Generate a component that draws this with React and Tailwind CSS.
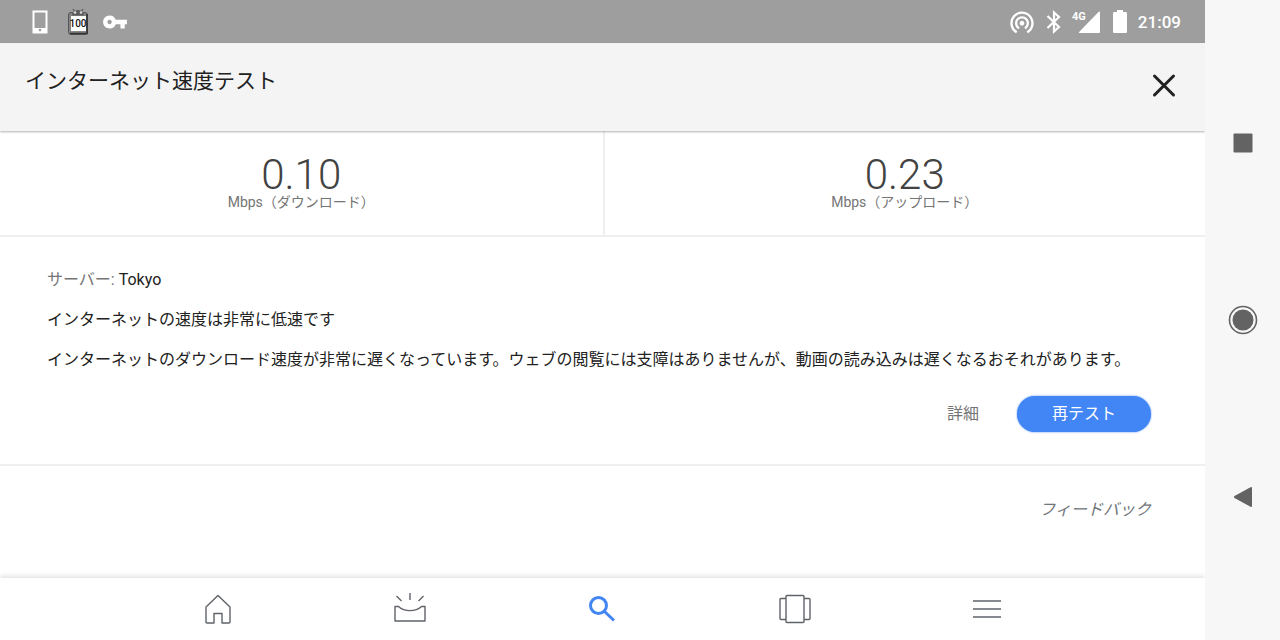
import { MdVpnKey, MdWifiTethering } from "react-icons/md";

function PhoneIcon() {
  return (
    <svg className="h-6 w-[22px]" viewBox="0 0 22 24" fill="none">
      <path d="M1.5 1.5h13v21h-13z" stroke="#fff" strokeWidth="2" />
      <path d="M1 18h14v5H1z" fill="#fff" />
      <circle cx="8" cy="20" r="1.3" fill="#9e9e9e" />
    </svg>
  );
}

function BatteryBadgeIcon() {
  return (
    <svg className="h-7 w-6" viewBox="0 0 24 28">
      <path d="M7 1 9 4M17 1 15 4" stroke="#555" strokeWidth="1.2" />
      <rect x="2.5" y="4.5" width="19" height="22" rx="2.5" fill="#858585" stroke="#555" />
      <path d="M21 6v19.5H4" fill="none" stroke="#333" strokeWidth="1.6" />
      <path d="M6 7.5a6 5.5 0 0 1 12 0z" fill="#5a5a5a" />
      <circle cx="9" cy="4.500" r="1.3" fill="#ddd" />
      <circle cx="15" cy="4.500" r="1.3" fill="#ddd" />
      <rect x="5" y="8" width="15" height="15" fill="#fff" />
      <text x="12" y="19" textAnchor="middle" fontSize="10" fontWeight="500" fontFamily="Roboto, sans-serif" fill="#111">
        100
      </text>
    </svg>
  );
}

function BluetoothIcon() {
  return (
    <svg className="h-6 w-4" viewBox="0 0 16 24" fill="none" stroke="#fff" strokeWidth="2.2">
      <path d="M1.500 6 13 17l-5 4.500v-19L13 7 1.500 18" />
    </svg>
  );
}

function SignalIcon() {
  return (
    <svg className="h-6 w-7" viewBox="0 0 28 24" fill="#fff">
      <text x="0" y="10" fontSize="11" fontWeight="700" fontFamily="Roboto, sans-serif">
        4G
      </text>
      <path d="M28 2.500V22q0 1-1 1H7.500q-1.200 0-.4-.9L26.500 2q1.500-1.300 1.500.5z" />
    </svg>
  );
}

function BatteryIcon() {
  return (
    <svg className="h-6 w-[18px]" viewBox="0 0 18 24" fill="#fff">
      <rect x="7" y="0" width="6" height="5" />
      <rect x="3" y="2" width="14" height="21" rx="1.2" />
    </svg>
  );
}

function HomeIcon() {
  return (
    <svg className="h-8 w-8" viewBox="0 0 32 32" fill="none" stroke="currentColor" strokeWidth="1.4" strokeLinejoin="round">
      <path d="M16 2.500 28 14v15q0 1-1 1h-7v-9.500h-8V30H5q-1 0-1-1V14z" />
    </svg>
  );
}

function UpdatesIcon() {
  return (
    <svg className="h-8 w-8" viewBox="0 0 32 32" fill="none" stroke="currentColor" strokeWidth="1.4" strokeLinejoin="round">
      <path d="M1 13.500h3.500c6 5.500 17 5.500 23 0H31V28H1z" />
      <path d="M16 0v7M2.500 3l5 5M29.500 3l-5 5" />
    </svg>
  );
}

function SearchIcon() {
  return (
    <svg className="h-8 w-8" viewBox="0 0 32 32" fill="none" stroke="currentColor" strokeWidth="3">
      <circle cx="12.500" cy="12.500" r="8" />
      <path d="m18 18 10 9.500" />
    </svg>
  );
}

function CollectionsIcon() {
  return (
    <svg className="h-8 w-8" viewBox="0 0 32 32" fill="none" stroke="currentColor" strokeWidth="1.4" strokeLinejoin="round">
      <rect x="7" y="2.500" width="18" height="27" rx="1" />
      <path d="M7 5.500H2q-1 0-1 1v19q0 1 1 1h5M25 5.500h5q1 0 1 1v19q0 1-1 1h-5" />
    </svg>
  );
}

function MoreIcon() {
  return (
    <svg className="h-8 w-8" viewBox="0 0 32 32" stroke="currentColor" strokeWidth="1.4">
      <path d="M2 8h28M2 16h28M2 24h28" />
    </svg>
  );
}

const results = [
  { value: "0.10", label: "Mbps（ダウンロード）" },
  { value: "0.23", label: "Mbps（アップロード）" },
];

const tabs = [
  { name: "ホーム", icon: <HomeIcon /> },
  { name: "最新情報", icon: <UpdatesIcon /> },
  { name: "検索", icon: <SearchIcon />, active: true },
  { name: "コレクション", icon: <CollectionsIcon /> },
  { name: "その他", icon: <MoreIcon /> },
];

function StatusBar() {
  return (
    <div className="flex h-[43px] items-center justify-between bg-[#9e9e9e] pr-6 pl-8 text-white">
      <div className="flex items-center gap-3">
        <PhoneIcon />
        <BatteryBadgeIcon />
        <MdVpnKey className="h-[26px] w-[26px]" />
      </div>
      <div className="flex items-center gap-[10px]">
        <MdWifiTethering className="h-7 w-7" />
        <BluetoothIcon />
        <SignalIcon />
        <BatteryIcon />
        <span className="text-[17px] leading-6 font-medium">21:09</span>
      </div>
    </div>
  );
}

function SystemNav() {
  return (
    <nav className="z-20 flex w-[75px] shrink-0 flex-col items-center justify-around bg-[#f7f7f7] py-[54px] text-[#636363]">
      <button type="button" aria-label="アプリ履歴">
        <svg className="h-8 w-8" viewBox="0 0 32 32" fill="currentColor">
          <rect x="6.500" y="6.500" width="19" height="19" rx="1" />
        </svg>
      </button>
      <button type="button" aria-label="ホーム">
        <svg className="h-8 w-8" viewBox="0 0 32 32" fill="currentColor">
          <circle cx="16" cy="16" r="10.500" />
          <circle cx="16" cy="16" r="13.500" fill="none" stroke="currentColor" strokeWidth="1.6" />
        </svg>
      </button>
      <button type="button" aria-label="戻る">
        <svg className="h-8 w-8" viewBox="0 0 32 32" fill="currentColor">
          <path d="M7.500 15 23.500 6.200q1.500-.7 1.500 1v17.600q0 1.700-1.500 1L7.500 17q-1.500-1 0-2z" />
        </svg>
      </button>
    </nav>
  );
}

export default function App() {
  return (
    <div className="flex min-h-screen bg-white font-['Roboto','Noto_Sans_CJK_JP',sans-serif] text-[#212121]" lang="ja">
      <div className="flex min-w-0 flex-1 flex-col">
        <StatusBar />

        <header className="z-10 flex h-[88px] items-start justify-between bg-[#f4f4f4] pt-6 pr-[25px] pl-[25px] shadow-[0_1px_2px_rgba(0,0,0,0.3)]">
          <h1 className="text-[21px] leading-7">インターネット速度テスト</h1>
          <button type="button" aria-label="閉じる" className="pt-1">
            <svg className="h-8 w-8" viewBox="0 0 32 32" fill="none" stroke="currentColor" strokeWidth="3" strokeLinecap="round">
              <path d="m6.500 5 19 19M25.500 5l-19 19" />
            </svg>
          </button>
        </header>

        <main className="flex-1">
          <section className="grid grid-cols-2 border-b-2 border-[#efefef]">
            {results.map((result) => (
              <div
                key={result.label}
                className="flex flex-col items-center border-[#efefef] py-[25px] text-center last:border-l-2"
              >
                <p className="text-[42px] leading-[38px] font-light text-[#424242]">{result.value}</p>
                <p className="text-sm leading-4 text-[#757575]">{result.label}</p>
              </div>
            ))}
          </section>

          <section className="border-b-2 border-[#efefef] pt-[31px] pr-[54px] pb-8 pl-[47px]">
            <p>
              <span className="text-[#757575]">サーバー:</span> Tokyo
            </p>
            <p className="mt-4">インターネットの速度は非常に低速です</p>
            <p className="mt-4">
              インターネットのダウンロード速度が非常に遅くなっています。ウェブの閲覧には支障はありませんが、動画の読み込みは遅くなるおそれがあります。
            </p>
            <div className="mt-6 flex items-center justify-end gap-[38px]">
              <button type="button" className="text-[#757575]">
                詳細
              </button>
              <button type="button" className="h-9 rounded-full bg-[#4285f4] px-[35px] text-white shadow-[0_0_2px_#4285f4]">
                再テスト
              </button>
            </div>
          </section>

          <div className="flex justify-end pt-8 pr-[54px]">
            <a href="#feedback" className="text-[#70757a] italic">
              フィードバック
            </a>
          </div>
        </main>

        <nav className="h-[62px] bg-white px-[122px] shadow-[0_-2px_5px_rgba(0,0,0,0.12)]">
          <div className="grid h-full grid-cols-5">
            {tabs.map((tab) => (
              <button
                key={tab.name}
                type="button"
                aria-label={tab.name}
                className={
                  tab.active
                    ? "flex items-center justify-center text-[#4285f4]"
                    : "flex items-center justify-center text-[#5f6368]"
                }
              >
                {tab.icon}
              </button>
            ))}
          </div>
        </nav>
      </div>
      <SystemNav />
    </div>
  );
}
